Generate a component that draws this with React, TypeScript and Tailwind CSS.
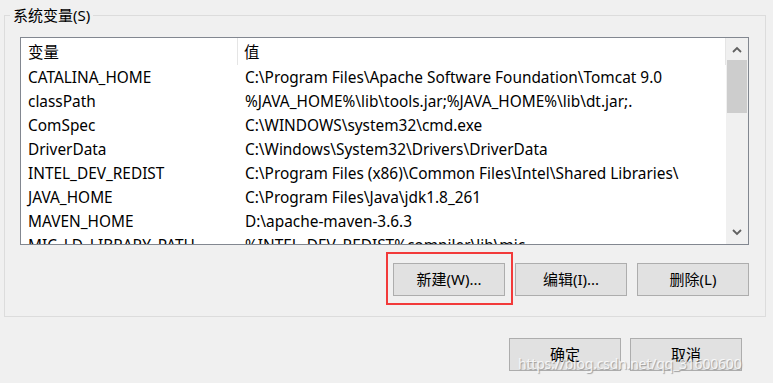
import React from "react";

const rows: [string, string][] = [
  ["CATALINA_HOME", "C:\\Program Files\\Apache Software Foundation\\Tomcat 9.0"],
  ["classPath", "%JAVA_HOME%\\lib\\tools.jar;%JAVA_HOME%\\lib\\dt.jar;."],
  ["ComSpec", "C:\\WINDOWS\\system32\\cmd.exe"],
  ["DriverData", "C:\\Windows\\System32\\Drivers\\DriverData"],
  ["INTEL_DEV_REDIST", "C:\\Program Files (x86)\\Common Files\\Intel\\Shared Libraries\\"],
  ["JAVA_HOME", "C:\\Program Files\\Java\\jdk1.8_261"],
  ["MAVEN_HOME", "D:\\apache-maven-3.6.3"],
  ["MIC_LD_LIBRARY_PATH", "%INTEL_DEV_REDIST%compiler\\lib\\mic"],
];

const font = {
  fontFamily: '"Noto Sans", "Noto Sans CJK SC", sans-serif',
};

function Btn({ children, className = "" }: { children: React.ReactNode; className?: string }) {
  return (
    <div
      className={
        "w-[112px] h-[33px] flex items-center justify-center bg-[#e1e1e1] border border-[#adadad] text-[15px] text-black " +
        className
      }
    >
      {children}
    </div>
  );
}

export default function App() {
  return (
    <div
      className="relative w-[773px] h-[383px] bg-[#f0f0f0] overflow-hidden text-black"
      style={font}
    >
      <div className="pt-[15px] pl-[4px]">
        <div className="relative w-[762px] h-[302px] border border-[#dcdcdc]">
          <span className="absolute left-[5px] -top-[12px] px-[3px] bg-[#f0f0f0] text-[15px] leading-[22px]">
            系统变量(S)
          </span>
          <div className="ml-[15px] mt-[21px] w-[729px] h-[208px] border border-[#828790] bg-white flex overflow-hidden">
            <div className="w-[705px] flex flex-col">
              <div className="h-[27px] flex items-center shrink-0 text-[15.4px]">
                <div className="w-[217px] h-full flex items-center pl-[7px] pt-[3px] border-r border-[#e5e5e5]">
                  变量
                </div>
                <div className="flex-1 h-full flex items-center pl-[6px] pt-[3px] border-r border-[#e5e5e5]">
                  值
                </div>
              </div>
              {rows.map(([k, v]) => (
                <div key={k} className="h-[24px] flex items-center shrink-0 pt-[1px] text-[15.4px] whitespace-nowrap">
                  <div className="w-[218px] pl-[7px]">{k}</div>
                  <div className="flex-1 pl-[6px]">{v}</div>
                </div>
              ))}
            </div>
            <div className="w-[22px] h-full bg-[#f0f0f0] flex flex-col items-center">
              <div className="h-[22px] w-full flex items-center justify-center">
                <svg width="10" height="7" viewBox="0 0 10 7">
                  <path d="M1 6 L5 2 L9 6" stroke="#606060" strokeWidth="1.8" fill="none" />
                </svg>
              </div>
              <div className="w-[20px] h-[53px] bg-[#cdcdcd]" />
              <div className="flex-1" />
              <div className="h-[24px] w-full flex items-center justify-center">
                <svg width="10" height="7" viewBox="0 0 10 7">
                  <path d="M1 1 L5 5 L9 1" stroke="#606060" strokeWidth="1.8" fill="none" />
                </svg>
              </div>
            </div>
          </div>
          <div className="mt-[18px] flex justify-end gap-[10px] pr-[16px]">
            <div className="relative">
              <Btn>新建(W)...</Btn>
              <span className="absolute -left-[7px] -right-[8px] -top-[11px] -bottom-[9px] border-2 border-[#f23a3a]" />
            </div>
            <Btn>编辑(I)...</Btn>
            <Btn>删除(L)</Btn>
          </div>
        </div>
      </div>
      <div className="mt-[21px] flex justify-end gap-[9px] pr-[31px]">
        <Btn>确定</Btn>
        <Btn>取消</Btn>
      </div>
      <span className="absolute left-[518px] top-[355px] text-[14px] leading-[18px] tracking-[-0.2px] text-white/80 [text-shadow:1px_1px_1px_#9a9a9a] whitespace-nowrap">
        https://blog.csdn.net/qq_31600600
      </span>
    </div>
  );
}
